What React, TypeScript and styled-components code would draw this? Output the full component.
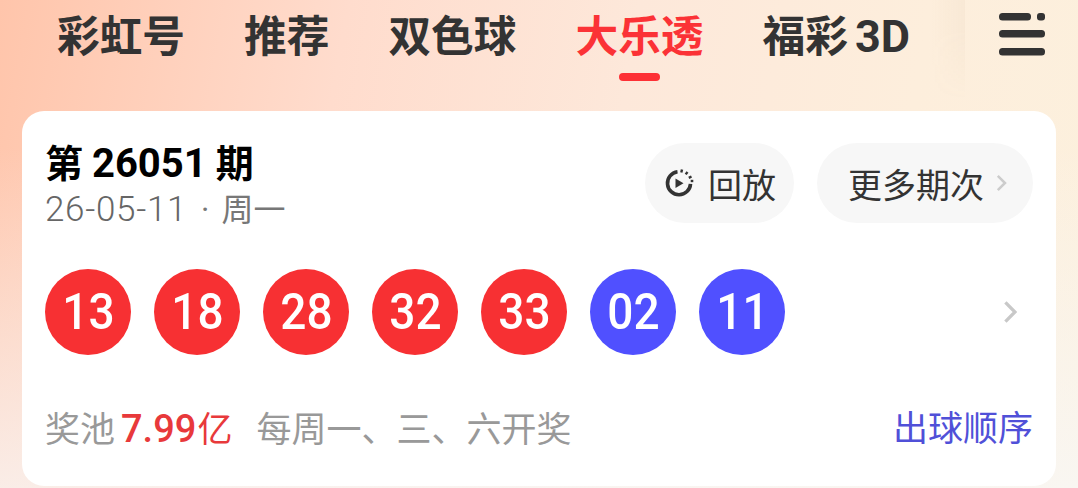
import React from "react";
import styled, { createGlobalStyle } from "styled-components";

const GlobalStyle = createGlobalStyle`
  html,
  body {
    margin: 0;
    padding: 0;
    background: #fff;
  }
  * {
    box-sizing: border-box;
  }
`;

const Page = styled.div`
  width: 1078px;
  height: 488px;
  overflow: hidden;
  font-family: Roboto, "Noto Sans CJK SC", sans-serif;
  background:
    linear-gradient(180deg, rgba(255, 255, 255, 0) 0%, rgba(255, 255, 255, 0) 30%, rgba(248, 248, 248, 0.75) 100%),
    linear-gradient(100deg, #ffc5ab 0%, #ffdccd 30%, #fde8da 55%, #fdeedc 80%, #fcf0dd 100%);
`;

const Nav = styled.nav`
  height: 111px;
  display: flex;
  align-items: flex-start;
`;

const Tabs = styled.div`
  position: relative;
  width: 965px;
  display: flex;
  gap: 59px;
  padding: 12px 0 0 57px;
  /* the soft fade the tab strip leaves next to the menu button */
  &::after {
    content: "";
    position: absolute;
    top: 0;
    right: 0;
    width: 34px;
    height: 100px;
    background: linear-gradient(90deg, rgba(170, 140, 100, 0), rgba(170, 140, 100, 0.05));
    mask-image: linear-gradient(180deg, #000 30%, transparent);
  }
`;

const Tab = styled.div<{ $active?: boolean }>`
  position: relative;
  height: 50px;
  font-size: 42.7px;
  line-height: 50px;
  font-weight: 700;
  white-space: nowrap;
  color: ${p => (p.$active ? "#fb3236" : "#333")};
  &::after {
    content: "";
    display: ${p => (p.$active ? "block" : "none")};
    position: absolute;
    left: 50%;
    top: 61px;
    width: 41px;
    height: 8px;
    margin-left: -21px;
    border-radius: 4px;
    background: #fd3035;
  }
`;

const TabSuffix = styled.span`
  margin-left: 7px;
  font-size: 45px;
  font-weight: 700;
`;

const MenuSlot = styled.div`
  flex: 1;
  height: 100%;
  display: flex;
  justify-content: flex-end;
  padding: 13px 32px 0 0;
`;

const Card = styled.section`
  width: 1034px;
  height: 375px;
  margin-left: 22px;
  padding: 32px 23px 0 23px;
  border-radius: 22px;
  background: #fff;
`;

const Head = styled.div`
  display: flex;
  justify-content: space-between;
  align-items: flex-start;
`;

const Title = styled.div`
  font-size: 38px;
  line-height: 42px;
  font-weight: 700;
  word-spacing: -0.5px;
  color: #000;
  white-space: nowrap;
`;

const TitleNum = styled.span`
  font-size: 40px;
`;

const DateLine = styled.div`
  margin-top: 6px;
  font-size: 32px;
  line-height: 38px;
  word-spacing: 4px;
  color: #777;
  white-space: nowrap;
`;

const DateNum = styled.span`
  margin-right: 2px;
  font-size: 35px;
  font-weight: 300;
  letter-spacing: 0.7px;
  color: #666;
`;

const Actions = styled.div`
  display: flex;
  gap: 23px;
`;

const Pill = styled.div<{ $w: number; $pad: number; $gap: number }>`
  width: ${p => p.$w}px;
  height: 80px;
  display: flex;
  align-items: center;
  gap: ${p => p.$gap}px;
  padding-left: ${p => p.$pad}px;
  border-radius: 40px;
  background: #f7f7f7;
  font-size: 34px;
  color: #333;
  white-space: nowrap;
`;

const BallRow = styled.div`
  display: flex;
  align-items: center;
  gap: 23px;
  margin-top: 40px;
`;

const Ball = styled.div<{ $blue?: boolean }>`
  width: 86px;
  height: 86px;
  border-radius: 50%;
  display: flex;
  align-items: center;
  justify-content: center;
  font-size: 50px;
  font-weight: 500;
  color: #fff;
  background: ${p => (p.$blue ? "#5050ff" : "#f73033")};
`;

const BallNum = styled.span`
  display: inline-block;
  transform: scaleX(0.92);
`;

const RowArrow = styled.div`
  margin-left: auto;
  margin-right: 16px;
  display: flex;
`;

const Foot = styled.div`
  display: flex;
  align-items: center;
  justify-content: space-between;
  margin-top: 52px;
  font-size: 35px;
  line-height: 44px;
  white-space: nowrap;
`;

const Prize = styled.div`
  color: #999;
`;

const Amount = styled.span`
  margin: 0 24px 0 6px;
  color: #e8393b;
`;

const AmountNum = styled.span`
  margin-right: 1px;
  font-size: 38px;
  font-weight: 500;
`;

const OrderLink = styled.div`
  color: #5050d8;
`;

const MenuIcon = () => (
  <svg width="48" height="44" viewBox="0 0 48 44">
    <g fill="#333">
      <rect x="1" y="0" width="32" height="7.5" rx="3.5" />
      <rect x="39" y="0" width="8" height="7.5" rx="3" />
      <rect x="1" y="17" width="46" height="7.5" rx="3.5" />
      <rect x="1" y="35" width="46" height="7.5" rx="3.5" />
    </g>
  </svg>
);

const ReplayIcon = () => (
  <svg width="30" height="30" viewBox="0 0 30 30">
    <path d="M13.5 3.8a11.5 11.5 0 1 0 13 12" fill="none" stroke="#333" strokeWidth="3.6" />
    <path d="M11.5 10.5v9.5l8-4.8z" fill="#333" />
    <g fill="none" stroke="#333" strokeWidth="2.4">
      <path d="M18 1.5l-.7 3" />
      <path d="M23.5 4l-1.8 2.4" />
      <path d="M27.5 8.5l-2.7 1.4" />
      <path d="M29.3 13h-2.6" />
    </g>
  </svg>
);

const Chevron = ({ size, color }: { size: number; color: string }) => (
  <svg width={size * 0.6} height={size} viewBox="0 0 12 20">
    <path d="M2 2l8 8-8 8" fill="none" stroke={color} strokeWidth="2.8" />
  </svg>
);

const tabs = [
  { label: "彩虹号" },
  { label: "推荐" },
  { label: "双色球" },
  { label: "大乐透", active: true },
  { label: "福彩", suffix: "3D" }
];
const balls = ["13", "18", "28", "32", "33", "02", "11"];

function App() {
  return (
    <Page>
      <GlobalStyle />
      <Nav>
        <Tabs>
          {tabs.map(t => (
            <Tab key={t.label} $active={t.active}>
              {t.label}
              {t.suffix && <TabSuffix>{t.suffix}</TabSuffix>}
            </Tab>
          ))}
        </Tabs>
        <MenuSlot>
          <MenuIcon />
        </MenuSlot>
      </Nav>
      <Card>
        <Head>
          <div>
            <Title>
              第 <TitleNum>26051</TitleNum> 期
            </Title>
            <DateLine>
              <DateNum>26-05-11</DateNum> · 周一
            </DateLine>
          </div>
          <Actions>
            <Pill $w={149} $pad={19} $gap={14}>
              <ReplayIcon />
              回放
            </Pill>
            <Pill $w={216} $pad={31} $gap={12}>
              更多期次
              <Chevron size={18} color="#ccc" />
            </Pill>
          </Actions>
        </Head>
        <BallRow>
          {balls.map((b, i) => (
            <Ball key={i} $blue={i > 4}>
              <BallNum>{b}</BallNum>
            </Ball>
          ))}
          <RowArrow>
            <Chevron size={24} color="#c8c8c8" />
          </RowArrow>
        </BallRow>
        <Foot>
          <Prize>
            奖池
            <Amount>
              <AmountNum>7.99</AmountNum>亿
            </Amount>
            每周一、三、六开奖
          </Prize>
          <OrderLink>出球顺序</OrderLink>
        </Foot>
      </Card>
    </Page>
  );
}

export default App;
